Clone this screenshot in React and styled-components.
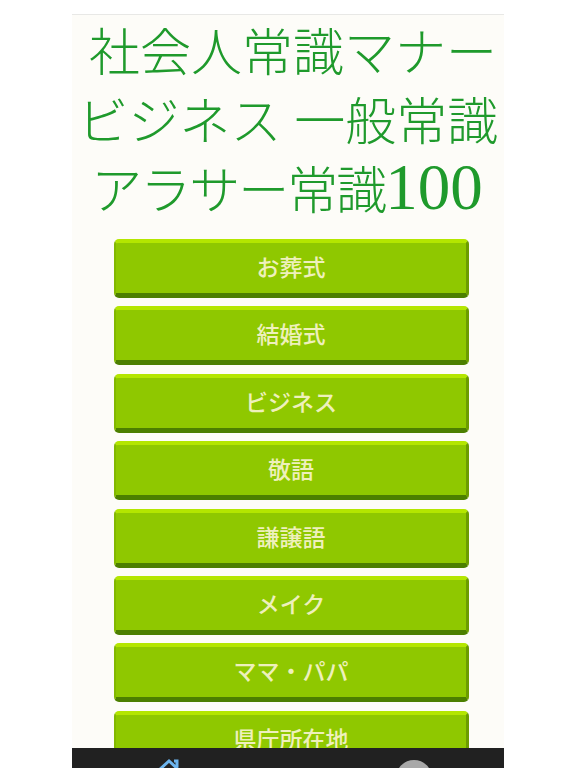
import React from "react";
import styled, { createGlobalStyle } from "styled-components";

const MENU = ["お葬式", "結婚式", "ビジネス", "敬語", "謙譲語", "メイク", "ママ・パパ", "県庁所在地"];

const App = () => {
  return (
    <Page>
      <GlobalStyle />
      <Phone>
        <Content>
          <Title>
            <TitleLine $shift={10}>社会人常識マナー</TitleLine>
            <TitleLine>ビジネス 一般常識</TitleLine>
            <TitleLine $tight $shift={-2}>
              アラサー常識<Digits>100</Digits>
            </TitleLine>
          </Title>
          <Menu>
            {MENU.map((label) => (
              <MenuButton key={label}>{label}</MenuButton>
            ))}
          </Menu>
        </Content>
        <NavBar>
          <NavSlot>
            <HomeIcon viewBox="0 0 26 24">
              <path d="M2 13 L13 3 L24 13 M5 11 V24 H21 V11 M18 3 h3 v6" />
            </HomeIcon>
          </NavSlot>
          <NavSlot>
            <RoundIcon />
          </NavSlot>
        </NavBar>
      </Phone>
    </Page>
  );
};

const GlobalStyle = createGlobalStyle`
  html, body {
    margin: 0;
    padding: 0;
    background: #ffffff;
  }
`;

const Page = styled.div`
  height: 768px;
  overflow: hidden;
  padding-top: 14px;
  box-sizing: border-box;
`;

const Phone = styled.div`
  width: 432px;
  height: 754px;
  margin-left: 72px;
  border-top: 1px solid #e8e8e6;
  box-sizing: border-box;
  background: #fdfcf8;
  display: flex;
  flex-direction: column;
`;

const Content = styled.div`
  height: 733px;
  overflow: hidden;
  flex-shrink: 0;
`;

const Title = styled.h1`
  margin: 0;
  padding-top: 5px;
  color: #1f9a2c;
  font-family: "Liberation Serif", "Noto Sans CJK JP", serif;
  font-size: 51px;
  font-weight: 300;
  line-height: 69px;
  text-align: center;
`;

const TitleLine = styled.div`
  white-space: pre;
  height: 69px;
  margin-left: ${(p) => p.$shift || 0}px;
  letter-spacing: ${(p) => (p.$tight ? "-2px" : "0")};
`;

const Digits = styled.span`
  font-size: 65px;
  line-height: 0;
  letter-spacing: 0;
`;

const Menu = styled.div`
  margin-top: 12px;
  padding: 0 35px 0 42px;
  display: flex;
  flex-direction: column;
  gap: 8.4px;
`;

const MenuButton = styled.div`
  height: 59px;
  flex-shrink: 0;
  box-sizing: border-box;
  border-radius: 5px;
  border-top: 4px solid #b4e600;
  border-bottom: 5px solid #4c7f00;
  border-left: 2px solid #82b800;
  border-right: 3px solid #6c9c00;
  padding-bottom: 4px;
  background: #8fc800;
  color: #eef0bc;
  font-family: "Liberation Sans", "Noto Sans CJK JP", sans-serif;
  font-size: 23px;
  font-weight: 500;
  display: flex;
  align-items: center;
  justify-content: center;
`;

const NavBar = styled.div`
  height: 60px;
  flex-shrink: 0;
  background: #212121;
  display: flex;
  justify-content: space-between;
  padding: 12px 72px 0 79px;
  box-sizing: border-box;
`;

const NavSlot = styled.div`
  width: 36px;
  display: flex;
  justify-content: center;
`;

const HomeIcon = styled.svg`
  width: 26px;
  height: 24px;
  margin-top: -2px;
  fill: none;
  stroke: #6cb4ee;
  stroke-width: 3;
`;

const RoundIcon = styled.div`
  width: 36px;
  height: 36px;
  border-radius: 50%;
  background: #a8a8a8;
`;

export default App;
